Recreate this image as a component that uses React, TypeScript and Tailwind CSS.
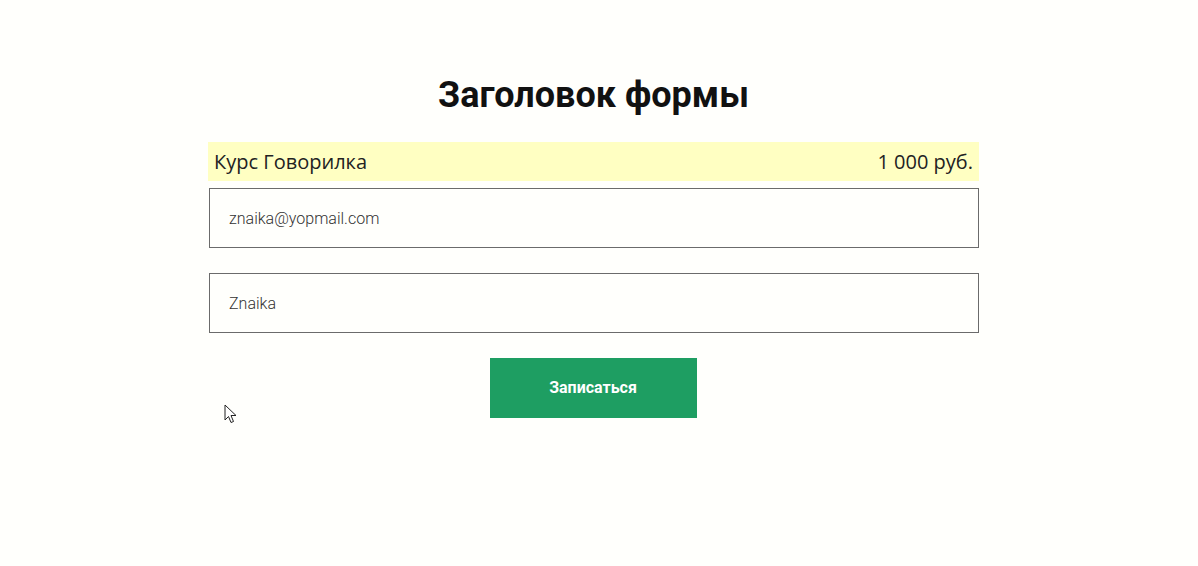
import React from "react";

function Cursor() {
  return (
    <svg width="13" height="20" viewBox="0 0 13 20" className="absolute left-[224px] top-[404px]">
      <path d="M1 1 L1 16 L4.5 12.5 L7 18.5 L9.5 17.5 L7 11.5 L12 11.5 Z" fill="#fff" stroke="#222" strokeWidth="1" strokeLinejoin="round" />
    </svg>
  );
}

export default function App() {
  return (
    <div className="relative min-h-[566px] w-full bg-[#fffffc]">
      <div className="flex w-[771px] flex-col pt-[71px] ml-[208px]">
        <h1 className="text-center text-[36px] font-bold leading-[48px] text-[#111] [font-family:Roboto,sans-serif]">
          Заголовок формы
        </h1>
        <div className="mt-[23px] flex h-[39px] items-center justify-between bg-[#ffffc2] px-[6px] text-[20px] text-[#222] [font-family:'Open_Sans',sans-serif]">
          <span>Курс Говорилка</span>
          <span>1 000 руб.</span>
        </div>
        <div className="mt-[7px] ml-px flex w-[770px] flex-col gap-[25px]">
          <input
            defaultValue="znaika@yopmail.com"
            className="h-[60px] w-full border border-[#6b6b6b] bg-transparent px-[19px] text-[16px] font-light text-[#333] outline-none [font-family:Roboto,sans-serif]"
          />
          <input
            defaultValue="Znaika"
            className="h-[60px] w-full border border-[#6b6b6b] bg-transparent px-[19px] text-[16px] font-light text-[#333] outline-none [font-family:Roboto,sans-serif]"
          />
          <div className="flex justify-center">
            <button className="ml-[-2px] h-[60px] w-[207px] bg-[#1e9e62] text-[16px] font-bold text-white [font-family:Roboto,sans-serif]">
              Записаться
            </button>
          </div>
        </div>
      </div>
      <Cursor />
    </div>
  );
}
